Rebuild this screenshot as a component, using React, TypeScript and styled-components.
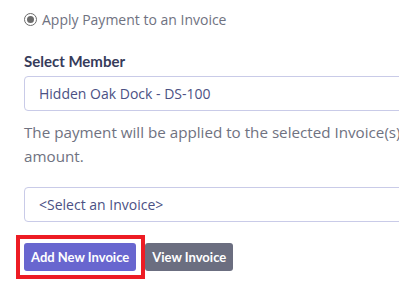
import styled, { createGlobalStyle } from 'styled-components';

const GlobalStyle = createGlobalStyle`
  html, body {
    margin: 0;
    padding: 0;
    background: #ffffff;
    overflow: hidden;
  }
  body {
    font-family: 'Open Sans', 'Noto Sans', sans-serif;
  }
`;

const Page = styled.div`
  width: 460px;
  padding: 10px 0 0 24px;
  box-sizing: border-box;
`;

const RadioRow = styled.label`
  display: flex;
  align-items: center;
  gap: 5px;
  font-size: 14px;
  color: #6f7281;
  height: 18px;
`;

const RadioDot = styled.span`
  width: 11px;
  height: 11px;
  border-radius: 50%;
  border: 1.5px solid #6b6b6b;
  display: flex;
  align-items: center;
  justify-content: center;
  &::after {
    content: '';
    width: 7px;
    height: 7px;
    border-radius: 50%;
    background: #6b6b6b;
  }
`;

const FieldLabel = styled.div`
  margin-top: 24px;
  font-family: 'Lato', 'Open Sans', sans-serif;
  font-size: 15px;
  font-weight: 700;
  color: #363b5a;
  line-height: 18px;
`;

const SelectBox = styled.div<{ $top: number }>`
  margin-top: ${(p) => p.$top}px;
  height: 33px;
  border: 1px solid #c9cbe8;
  border-radius: 4px;
  padding-left: 14px;
  display: flex;
  align-items: center;
  font-size: 14px;
  color: #4b5184;
`;

const HelpText = styled.p`
  margin: 9px 0 0;
  font-size: 15.2px;
  line-height: 24px;
  color: #6f7281;
  white-space: nowrap;
`;

const Actions = styled.div`
  margin-top: 13px;
  margin-left: -8px;
  display: flex;
  align-items: center;
`;

const Highlight = styled.div`
  border: 4px solid #ed1c24;
  padding: 4px 5px 4px 4px;
  display: flex;
`;

const Button = styled.button<{ $tone: 'primary' | 'muted' }>`
  height: 28px;
  border: none;
  border-radius: 3px;
  padding: 0 7px;
  font-family: 'Lato', 'Open Sans', sans-serif;
  font-size: 13px;
  font-weight: 700;
  color: #ffffff;
  background: ${(p) => (p.$tone === 'primary' ? '#6866cf' : '#6b6e80')};
  cursor: pointer;
`;

export default function App() {
  return (
    <>
      <GlobalStyle />
      <Page>
        <RadioRow>
          <RadioDot />
          Apply Payment to an Invoice
        </RadioRow>
        <FieldLabel>Select Member</FieldLabel>
        <SelectBox $top={6}>Hidden Oak Dock - DS-100</SelectBox>
        <HelpText>
          The payment will be applied to the selected Invoice(s) up to the
          <br />
          amount.
        </HelpText>
        <SelectBox $top={19}>&lt;Select an Invoice&gt;</SelectBox>
        <Actions>
          <Highlight>
            <Button $tone="primary">Add New Invoice</Button>
          </Highlight>
          <Button $tone="muted">View Invoice</Button>
        </Actions>
      </Page>
    </>
  );
}
